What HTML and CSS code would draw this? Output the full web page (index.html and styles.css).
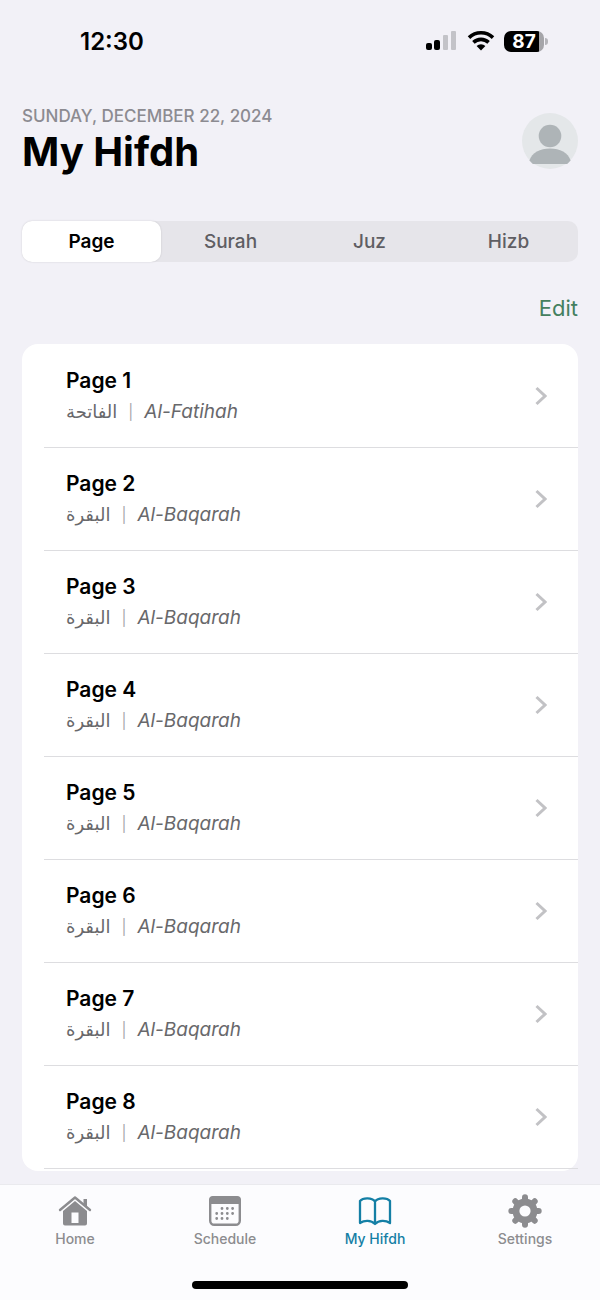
FILE: index.html
```html
<!DOCTYPE html>
<html lang="en">

<head>
    <meta charset="UTF-8">
    <meta name="viewport" content="width=device-width, initial-scale=1.0">
    <title>My Hifdh</title>
    <link rel="stylesheet" href="styles.css">
</head>

<body>
    <div class="status">
        <span class="time">12:30</span>
        <div class="indicators">
            <svg width="32" height="20" viewBox="0 0 32 20">
                <rect x="0" y="12" width="6" height="7" rx="2" />
                <rect x="8" y="9" width="6" height="10" rx="2" />
                <rect class="off" x="17" y="4" width="5" height="15" rx="1" />
                <rect class="off" x="25" y="0" width="5" height="19" rx="1" />
            </svg>
            <svg width="28" height="20" viewBox="0 0 28 20">
                <path d="M2 6.6a17.4 17.4 0 0 1 24 0M6.4 11.4a11 11 0 0 1 15.2 0" fill="none" stroke="#000" stroke-width="3.6" />
                <path d="M14 19.4l-4.4-4.5a6.4 6.4 0 0 1 8.8 0z" />
            </svg>
            <div class="battery">87</div>
        </div>
    </div>
    <header>
        <div>
            <div class="date">SUNDAY, DECEMBER 22, 2024</div>
            <h1>My Hifdh</h1>
        </div>
        <button class="avatar" aria-label="Profile">
            <svg width="56" height="56" viewBox="0 0 56 56">
                <circle cx="28" cy="28" r="28" fill="#e4e7e9" />
                <circle cx="28" cy="23" r="11.3" fill="#aeb4b7" />
                <path d="M7.4 47.5C10 39.500 18 35.500 28 35.500s18 4 20.600 12l-3.400 3.500H10.800z" fill="#aeb4b7" />
            </svg>
        </button>
    </header>
    <main>
        <div class="segments">
            <button class="selected">Page</button>
            <button>Surah</button>
            <button>Juz</button>
            <button>Hizb</button>
        </div>
        <div class="toolbar">
            <button class="edit">Edit</button>
        </div>
        <ul class="pages">
            <li>
                <a href="#page1">
                    <div>
                        <h2>Page 1</h2>
                        <p><span class="arabic" lang="ar" dir="rtl">الفاتحة</span><span class="bar">|</span><i>Al-Fatihah</i></p>
                    </div>
                    <svg class="chevron" viewBox="0 0 12 20"><path d="M1.500 2l8.500 8-8.500 8" /></svg>
                </a>
            </li>
            <li>
                <a href="#page2">
                    <div>
                        <h2>Page 2</h2>
                        <p><span class="arabic" lang="ar" dir="rtl">البقرة</span><span class="bar">|</span><i>Al-Baqarah</i></p>
                    </div>
                    <svg class="chevron" viewBox="0 0 12 20"><path d="M1.500 2l8.500 8-8.500 8" /></svg>
                </a>
            </li>
            <li>
                <a href="#page3">
                    <div>
                        <h2>Page 3</h2>
                        <p><span class="arabic" lang="ar" dir="rtl">البقرة</span><span class="bar">|</span><i>Al-Baqarah</i></p>
                    </div>
                    <svg class="chevron" viewBox="0 0 12 20"><path d="M1.500 2l8.500 8-8.500 8" /></svg>
                </a>
            </li>
            <li>
                <a href="#page4">
                    <div>
                        <h2>Page 4</h2>
                        <p><span class="arabic" lang="ar" dir="rtl">البقرة</span><span class="bar">|</span><i>Al-Baqarah</i></p>
                    </div>
                    <svg class="chevron" viewBox="0 0 12 20"><path d="M1.500 2l8.500 8-8.500 8" /></svg>
                </a>
            </li>
            <li>
                <a href="#page5">
                    <div>
                        <h2>Page 5</h2>
                        <p><span class="arabic" lang="ar" dir="rtl">البقرة</span><span class="bar">|</span><i>Al-Baqarah</i></p>
                    </div>
                    <svg class="chevron" viewBox="0 0 12 20"><path d="M1.500 2l8.500 8-8.500 8" /></svg>
                </a>
            </li>
            <li>
                <a href="#page6">
                    <div>
                        <h2>Page 6</h2>
                        <p><span class="arabic" lang="ar" dir="rtl">البقرة</span><span class="bar">|</span><i>Al-Baqarah</i></p>
                    </div>
                    <svg class="chevron" viewBox="0 0 12 20"><path d="M1.500 2l8.500 8-8.500 8" /></svg>
                </a>
            </li>
            <li>
                <a href="#page7">
                    <div>
                        <h2>Page 7</h2>
                        <p><span class="arabic" lang="ar" dir="rtl">البقرة</span><span class="bar">|</span><i>Al-Baqarah</i></p>
                    </div>
                    <svg class="chevron" viewBox="0 0 12 20"><path d="M1.500 2l8.500 8-8.500 8" /></svg>
                </a>
            </li>
            <li>
                <a href="#page8">
                    <div>
                        <h2>Page 8</h2>
                        <p><span class="arabic" lang="ar" dir="rtl">البقرة</span><span class="bar">|</span><i>Al-Baqarah</i></p>
                    </div>
                    <svg class="chevron" viewBox="0 0 12 20"><path d="M1.500 2l8.500 8-8.500 8" /></svg>
                </a>
            </li>
        </ul>
    </main>
    <footer>
        <nav>
            <a href="#home">
                <svg width="34" height="34" viewBox="0 0 34 34">
                    <path d="M2 16L17 3.500 32 16" fill="none" stroke="currentColor" stroke-width="2.400" stroke-linecap="round" stroke-linejoin="round" />
                    <path d="M25.500 5h3.500v9l-3.500-3z" />
                    <path fill-rule="evenodd" d="M17 7L29 17v12.500a2 2 0 0 1-2 2H7a2 2 0 0 1-2-2V17zM13.500 18.500V29h7V18.500z" />
                </svg>
                Home
            </a>
            <a href="#schedule">
                <svg width="34" height="34" viewBox="0 0 34 34">
                    <rect x="2.200" y="3.200" width="29.600" height="27.600" rx="4" fill="none" stroke="currentColor" stroke-width="2.400" />
                    <path d="M1 10V6a4 4 0 0 1 4-4h24a4 4 0 0 1 4 4v4z" />
                    <path d="M14 14.500h.01M19.300 14.500h.01M24.600 14.500h.01M8.700 19.500h.01M14 19.500h.01M19.300 19.500h.01M24.600 19.500h.01M8.700 24.500h.01M14 24.500h.01M19.300 24.500h.01" stroke="currentColor" stroke-width="2.800" stroke-linecap="round" />
                </svg>
                Schedule
            </a>
            <a class="active" href="#hifdh">
                <svg width="34" height="34" viewBox="0 0 34 34">
                    <path d="M17 7.500C14 3.300 5 3.300 2 7v22c4.500-3 11-3 15 1 4-4 10.500-4 15-1V7c-3-3.700-12-3.700-15 .500v22" fill="none" stroke="currentColor" stroke-width="2.300" stroke-linejoin="round" />
                </svg>
                My Hifdh
            </a>
            <a href="#settings">
                <svg width="34" height="34" viewBox="0 0 34 34">
                    <path d="M17 3.300v27.400M3.300 17h27.400M7.300 7.300l19.400 19.400M26.700 7.300L7.300 26.700" stroke="currentColor" stroke-width="6" stroke-linecap="round" />
                    <circle cx="17" cy="17" r="12.500" />
                    <circle class="hole" cx="17" cy="17" r="5.600" />
                </svg>
                Settings
            </a>
        </nav>
        <div class="home-indicator"></div>
    </footer>
</body>

</html>
```
FILE: styles.css
```css
* {
    box-sizing: border-box;
}

body {
    display: flex;
    flex-direction: column;
    min-height: 100vh;
    margin: 0;
    background: #f2f1f7;
    color: #000;
    font-family: Inter, "Liberation Sans", sans-serif;
}

button {
    border: 0;
    padding: 0;
    background: none;
    font: inherit;
    color: inherit;
}

a {
    color: inherit;
    text-decoration: none;
}

h1,
h2,
p,
ul {
    margin: 0;
    padding: 0;
}

.status {
    display: flex;
    justify-content: space-between;
    align-items: center;
    height: 82px;
    padding: 0 56px 0 80px;
}

.time {
    font-size: 24px;
    font-weight: 600;
}

.indicators {
    display: flex;
    align-items: center;
    gap: 9px;
}

.indicators .off {
    fill: #c3c3c8;
}

.battery {
    position: relative;
    width: 40px;
    height: 21px;
    border-radius: 7px;
    background: linear-gradient(to right, #000 35px, #a5a5a9 35px);
    color: #fff;
    font-size: 19px;
    font-weight: 700;
    line-height: 21px;
    text-align: center;
}

.battery::after {
    content: "";
    position: absolute;
    left: 41px;
    top: 7px;
    width: 3px;
    height: 7px;
    border-radius: 0 3px 3px 0;
    background: #b5b5ba;
}

header {
    display: flex;
    justify-content: space-between;
    align-items: center;
    padding: 23px 22px 0;
}

.date {
    color: #8c8b91;
    font-size: 17px;
    font-weight: 500;
    line-height: 22px;
}

h1 {
    font-size: 40px;
    font-weight: 700;
    line-height: 50px;
}

.avatar svg {
    display: block;
}

main {
    padding: 44px 22px 13px;
}

.segments {
    display: grid;
    grid-template-columns: repeat(4, 1fr);
    height: 41px;
    border-radius: 10px;
    background: #e6e5ea;
    color: #5f5e63;
    font-size: 19px;
    font-weight: 500;
}

.segments .selected {
    border-radius: 10px;
    background: #fff;
    box-shadow: 0 0 2px rgba(0, 0, 0, 0.15);
    color: #000;
    font-weight: 600;
}

.toolbar {
    display: flex;
    justify-content: flex-end;
    padding: 32px 0 22px;
}

.edit {
    color: #44805f;
    font-size: 22px;
    line-height: 28px;
}

.pages {
    padding: 1px 0 2px;
    border-radius: 16px;
    background: #fff;
    list-style: none;
}

.pages li {
    padding-left: 22px;
}

.pages a {
    display: flex;
    justify-content: space-between;
    align-items: center;
    height: 103px;
    padding: 0 31px 0 22px;
    border-bottom: 1px solid #dddde0;
}

.pages h2 {
    font-size: 21px;
    font-weight: 600;
    line-height: 32px;
}

.pages p {
    display: flex;
    align-items: center;
    gap: 11px;
    color: #68686b;
    font-size: 19px;
    line-height: 30px;
}

.arabic {
    font-family: "DejaVu Sans", sans-serif;
    font-size: 18px;
}

.bar {
    color: #a8a8ab;
    font-size: 15px;
}

.chevron {
    width: 12px;
    height: 20px;
    fill: none;
    stroke: #c2c2c5;
    stroke-width: 3;
}

footer {
    display: flex;
    flex-direction: column;
    justify-content: space-between;
    align-items: center;
    height: 116px;
    margin-top: auto;
    padding: 9px 0 11px;
    border-top: 1px solid #eaeaee;
    background: #fcfcfe;
}

nav {
    display: grid;
    grid-template-columns: repeat(4, 1fr);
    width: 100%;
}

nav a {
    display: flex;
    flex-direction: column;
    align-items: center;
    gap: 2px;
    color: #8c8c8f;
    font-size: 14px;
    font-weight: 500;
    line-height: 18px;
}

nav svg {
    fill: currentColor;
}

nav .active {
    color: #147fa5;
}

.hole {
    fill: #fcfcfe;
}

.home-indicator {
    width: 36%;
    height: 8px;
    border-radius: 4px;
    background: #000;
}
```
